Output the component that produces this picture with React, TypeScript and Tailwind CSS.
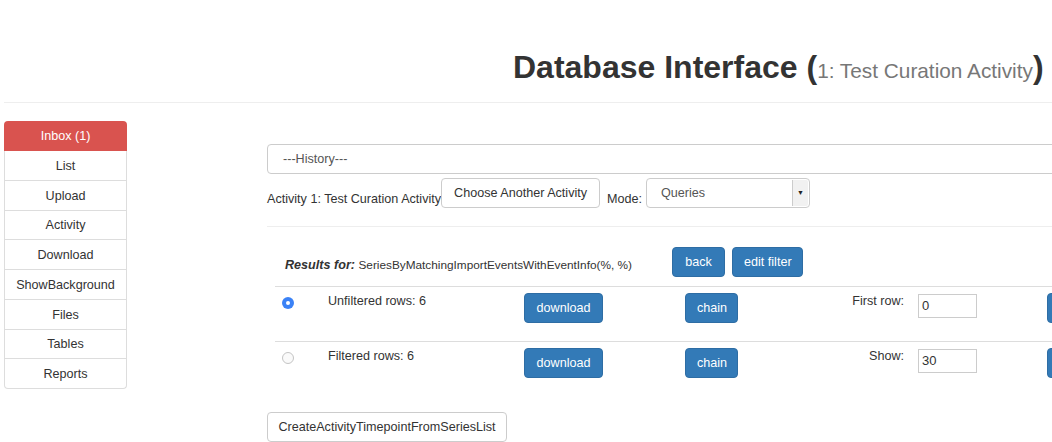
const navItems = ['List', 'Upload', 'Activity', 'Download', 'ShowBackground', 'Files', 'Tables', 'Reports'];

function BlueButton({ label, className = '' }: { label: string; className?: string }) {
    return (
        <button
            className={`h-[30px] shrink-0 whitespace-nowrap rounded-[4px] border border-[#2e6da4] bg-[#337ab7] px-[11px] text-white ${className}`}
        >
            {label}
        </button>
    );
}

function Radio({ checked }: { checked?: boolean }) {
    if (checked) {
        return (
            <div className="flex h-[12px] w-[12px] items-center justify-center rounded-full bg-[#3b82f6]">
                <div className="h-[4px] w-[4px] rounded-full bg-white" />
            </div>
        );
    }
    return <div className="h-[12px] w-[12px] rounded-full border border-[#c4c4c4] bg-[#fafafa]" />;
}

function ResultRow({ checked, text, label, value }: { checked?: boolean; text: string; label: string; value: string }) {
    return (
        <div className="flex h-[55px] items-start border-t border-[#ddd]">
            <div className="w-[53px] shrink-0 pl-[7px] pt-[10px]">
                <Radio checked={checked} />
            </div>
            <div className="w-[196px] shrink-0 pt-[5px] leading-[18px]">{text}</div>
            <div className="w-[161px] shrink-0 pt-[6px]">
                <BlueButton label="download" className="w-[79px] px-0" />
            </div>
            <div className="w-[53px] shrink-0 pt-[6px]">
                <BlueButton label="chain" className="w-[53px] px-0" />
            </div>
            <div className="w-[166px] shrink-0 pt-[5px] text-right leading-[18px]">{label}</div>
            <div className="ml-[14px] w-[59px] shrink-0 pt-[7px]">
                <div className="flex h-[24px] items-center border border-[#ccc] pl-[3px] text-[13px]">{value}</div>
            </div>
            <div className="ml-[70px] shrink-0 pt-[6px]">
                <BlueButton label="" className="w-[60px]" />
            </div>
        </div>
    );
}

export default function App() {
    return (
        <div
            className="h-[442px] w-[1052px] overflow-hidden bg-white text-[12.6px] text-[#333]"
            style={{ fontFamily: '"Liberation Sans", Arial, sans-serif' }}
        >
            <header className="pt-[50px]">
                <h1 className="h-[35px] whitespace-nowrap pl-[513px] text-[32px] font-bold leading-[35px] text-[#333]">
                    Database Interface (
                    <span className="text-[20.8px] font-normal leading-none text-[#777]">1: Test Curation Activity</span>)
                </h1>
                <div className="ml-[4px] mt-[17px] w-[1200px] border-t border-[#eee]" />
            </header>

            <div className="mt-[18px] flex items-start">
                <nav className="ml-[4px] w-[123px] shrink-0 text-center">
                    <div className="flex h-[30px] items-center justify-center rounded-t-[4px] bg-[#d9534f] pt-[1px] text-white">
                        Inbox (1)
                    </div>
                    {navItems.map((item, i) => (
                        <div
                            key={item}
                            className={`flex h-[29.75px] items-center justify-center border-x border-b border-[#ddd] pt-[2px] ${
                                i === navItems.length - 1 ? 'rounded-b-[4px]' : ''
                            }`}
                        >
                            {item}
                        </div>
                    ))}
                </nav>

                <main className="ml-[140px] w-[900px] shrink-0 pt-[23px]">
                    <div className="flex h-[30px] items-center rounded-[4px] border border-[#ccc] pl-[15px] text-[#555]">
                        ---History---
                    </div>

                    <div className="mt-[4px] flex items-end">
                        <span className="leading-[18px]">Activity 1: Test Curation Activity</span>
                        <button className="h-[30px] w-[159px] shrink-0 rounded-[4px] border border-[#ccc] bg-white text-[#333]">
                            Choose Another Activity
                        </button>
                        <span className="ml-[7px] leading-[18px]">Mode:</span>
                        <div className="ml-[4px] flex h-[30px] w-[164px] items-center rounded-[4px] border border-[#ccc] bg-white pl-[14px] text-[#555]">
                            <span className="flex-1">Queries</span>
                            <div className="mr-[1px] flex h-[26px] w-[16px] items-center justify-center rounded-r-[2px] border-l border-[#ccc] bg-[#f1f1f1] text-[7px] text-[#222]">
                                ▼
                            </div>
                        </div>
                    </div>

                    <div className="mt-[18px] border-t border-[#eee]" />

                    <div className="ml-[8px]">
                        <div className="flex h-[59px] items-end pb-[9px] pl-[10px]">
                            <span className="mb-[3px] w-[387px] shrink-0 whitespace-nowrap leading-[18px]">
                                <b className="italic">Results for:</b>{' '}
                                <span className="text-[11.8px]">SeriesByMatchingImportEventsWithEventInfo(%, %)</span>
                            </span>
                            <BlueButton label="back" className="w-[53px] px-0" />
                            <BlueButton label="edit filter" className="ml-[7px] w-[71px] px-0" />
                        </div>
                        <ResultRow checked text="Unfiltered rows: 6" label="First row:" value="0" />
                        <ResultRow text="Filtered rows: 6" label="Show:" value="30" />
                    </div>

                    <button className="mt-[16px] h-[30px] w-[240px] rounded-[4px] border border-[#ccc] bg-white text-[#333]">
                        CreateActivityTimepointFromSeriesList
                    </button>
                </main>
            </div>
        </div>
    );
}
